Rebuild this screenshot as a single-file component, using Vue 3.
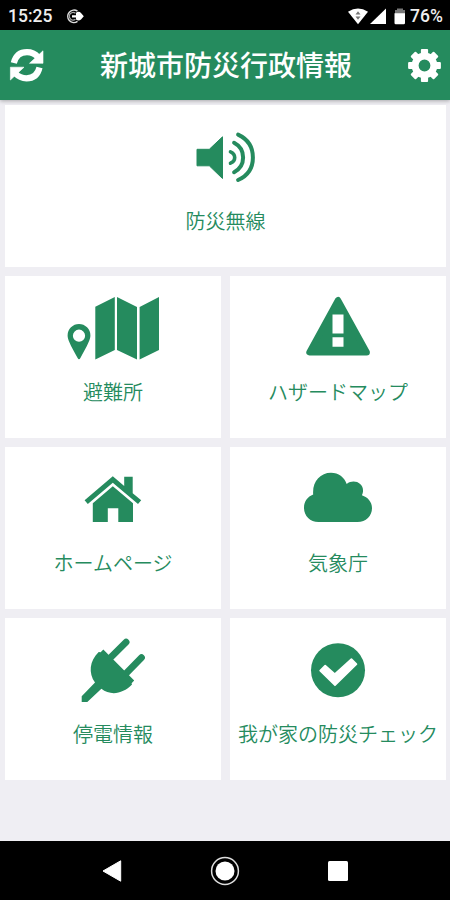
<script setup>
const cards = [
  { id: 'radio', label: '防災無線', wide: true, box: '175.5 117 100 80' },
  { id: 'shelter', label: '避難所', box: '63 288 100 80' },
  { id: 'hazard', label: 'ハザードマップ', box: '288 288 100 80' },
  { id: 'home', label: 'ホームページ', box: '63 459 100 80' },
  { id: 'weather', label: '気象庁', box: '288 459 100 80' },
  { id: 'outage', label: '停電情報', box: '63 630 100 80' },
  { id: 'check', label: '我が家の防災チェック', box: '288 630 100 80' },
]
const teeth = [0, 45, 90, 135, 180, 225, 270, 315]
</script>

<template>
  <div class="screen">
    <div class="status">
      <span class="time">15:25</span>
      <svg class="notice" width="20" height="18" viewBox="65 6 20 18">
        <path d="M77.5 10.2A6.2 6.2 0 1 0 77.5 20.4" fill="none" stroke="#ddd" stroke-width="1.5" />
        <path d="M75.5 12.2A3.8 3.8 0 1 0 75.5 18.3" fill="none" stroke="#aaa" stroke-width="1.2" />
        <path d="M72 14.2h4v-2.4q3-2 5 .3l2.8 3.2-2.8 3.2q-2.4 2-5 0v-2h-4z" fill="#fff" />
      </svg>
      <svg class="signals" width="60" height="18" viewBox="348 6 60 18">
        <path d="M348 10.8Q358 4.4 368 10.8L358 23.2Z" fill="#fff" />
        <path d="M355.5 13.5l2.5-3.3 2.5 3.3zM355.5 15.5l2.5 3.3 2.5-3.3z" fill="#777" />
        <path d="M370 23L386 7.5V23Z" fill="#fff" />
        <path d="M397 7.5h6V9h2v5h-10V9h2z" fill="#777" />
        <path d="M394.5 12.3h10.5v9.7q0 1.3-1.3 1.3h-7.9q-1.3 0-1.3-1.3z" fill="#fff" />
      </svg>
      <span class="battery">76%</span>
    </div>

    <header class="bar">
      <svg width="36" height="36" viewBox="9 47 36 36">
        <g fill="none" stroke="#fff" stroke-width="6.2">
          <path d="M13.8 63Q16.5 52.2 27 52.2Q33.5 52.2 38 57" />
          <path d="M39.5 67.5Q37 78.3 26.5 78.3Q20 78.3 15.5 73.5" />
        </g>
        <path d="M43 50.8V63.3H29.5ZM10.4 80V67.2H24Z" fill="#fff" stroke="#fff" stroke-width=".6" stroke-linejoin="round" />
      </svg>
      <h1>新城市防災行政情報</h1>
      <svg width="36" height="36" viewBox="-17.5 -18.5 36 36">
        <rect v-for="a in teeth" :key="a" x="-3.6" y="-16.4" width="7.2" height="8" rx="1" fill="#fff" :transform="`rotate(${a})`" />
        <circle r="9.4" fill="none" stroke="#fff" stroke-width="7" />
      </svg>
    </header>

    <main class="grid">
      <div v-for="c in cards" :key="c.id" class="card" :class="{ wide: c.wide }">
        <svg class="icon" width="100" height="80" :viewBox="c.box">
          <template v-if="c.id === 'radio'">
            <path d="M196.5 149.3H208.8L222 136.8V178.5L208.8 165.8H196.5Z" stroke="#258b5e" stroke-linejoin="round" />
            <g fill="none" stroke="#258b5e" stroke-width="4" stroke-linecap="round">
              <path d="M230 151.8Q234.2 153.5 234.2 157.5T230 163.2" stroke-width="3.6" />
              <path d="M233.6 142.8Q242.6 147.5 242.6 157.5T233.6 172.2" />
              <path d="M237.6 134.6Q252.4 141.5 252.4 157.5T237.6 180" />
            </g>
          </template>
          <template v-else-if="c.id === 'shelter'">
            <path d="M95.3 306.7L114.8 297V350L95.3 359.6ZM117 297L137 307V359.6L117 350ZM139.6 307L159 297V350L139.6 359.6Z" />
            <path fill-rule="evenodd" d="M79 324A11.4 11.4 0 0 1 90.4 335.4C90.4 339.5 88 344 80.4 358Q79 360.6 77.6 358C70 344 67.6 339.5 67.6 335.4A11.4 11.4 0 0 1 79 324ZM79 329.6A6.1 6.1 0 1 0 79 341.8A6.1 6.1 0 1 0 79 329.6Z" />
          </template>
          <template v-else-if="c.id === 'hazard'">
            <path d="M338 300.2L309.5 352.3H366.7Z" stroke="#258b5e" stroke-width="6.4" stroke-linejoin="round" />
            <path d="M332.5 314.5h11v19h-11zM332.5 337.3h11v9.5h-11z" fill="#fff" />
          </template>
          <template v-else-if="c.id === 'home'">
            <path d="M84.6 500.3L112.8 476.3L124.2 486V476.8H132.7V493.2L141.2 500.3L138 504.1L112.8 482.7L87.8 504.1Z" />
            <path d="M112.8 486.3L133 503.3V522H118.3V508.3H107.8V522H92.8V503.3Z" />
          </template>
          <template v-else-if="c.id === 'weather'">
            <path d="M318.5 522C310 522 304 516 304 507.7C304 501.5 307.7 496.8 313.2 494.6C312 482 320 472.8 331 472.8C338.6 472.8 344.2 477.4 346.7 483.9C354 478.4 364.8 483.2 362.8 492.8Q362.5 494 361.9 495.2C368 497.2 372 502 372 508C372 516 366 522 357.5 522Z" />
          </template>
          <template v-else-if="c.id === 'outage'">
            <path d="M103.3 649.6L134.2 680.5L131.6 683.2L132 684.6C123 694 110.5 696 101.4 688.8L87.3 702H81.7V696.2L95 682.6C88.2 673 89.5 661 98.7 652L100.7 652.2Z" />
            <path d="M111 657.2L126.1 642.1M126.6 672.8L141.5 657.7" stroke="#258b5e" stroke-width="6.8" stroke-linecap="round" />
          </template>
          <template v-else>
            <circle cx="338" cy="670.3" r="27" />
            <path d="M320.2 670.7L325.2 665.7L334.8 674.2L351.4 659.2L356.4 664.2L335 685.2Z" fill="#fff" stroke="#fff" stroke-width="1.8" stroke-linejoin="round" />
          </template>
        </svg>
        <span class="label">{{ c.label }}</span>
      </div>
    </main>

    <nav class="nav">
      <svg width="30" height="30" viewBox="97 855.5 30 30">
        <path d="M103 870.5L120.7 860.3V880.7Z" fill="#fff" stroke="#fff" stroke-linejoin="round" />
      </svg>
      <svg width="30" height="30" viewBox="-15 -15 30 30">
        <circle r="13.4" fill="none" stroke="#ddd" stroke-width="1.5" />
        <circle r="9.5" fill="#fff" />
      </svg>
      <svg width="30" height="30" viewBox="-15 -15 30 30">
        <rect x="-10" y="-10" width="20" height="20" rx="1.5" fill="#fff" />
      </svg>
    </nav>
  </div>
</template>

<style>
body {
  margin: 0;
}
</style>

<style scoped>
.screen {
  width: 450px;
  height: 900px;
  display: flex;
  flex-direction: column;
  overflow: hidden;
  background: #efeef3;
  font-family: "Noto Sans CJK JP", sans-serif;
}
svg {
  display: block;
  flex: none;
}
.status {
  height: 30px;
  flex: none;
  box-sizing: border-box;
  padding: 1px 7px 0 8px;
  display: flex;
  align-items: center;
  background: #000;
  color: #eee;
  font: 500 17.5px/28px Roboto, sans-serif;
}
.time {
  width: 57px;
}
.signals {
  margin-left: auto;
  margin-right: 2px;
}
.battery {
  width: 33px;
  white-space: nowrap;
}
.bar {
  height: 70px;
  flex: none;
  box-sizing: border-box;
  padding: 0 7px 0 9px;
  display: flex;
  align-items: center;
  justify-content: space-between;
  background: #258b5e;
  box-shadow: 0 1px 4px rgba(0, 0, 0, 0.3);
}
h1 {
  margin: 0;
  padding-bottom: 2px;
  color: #fff;
  font-size: 28px;
  line-height: 40px;
  font-weight: 500;
}
.grid {
  flex: 1;
  padding: 5px 4px 0 5px;
  display: grid;
  grid-template-columns: 1fr 1fr;
  grid-auto-rows: 162px;
  align-content: start;
  gap: 9px;
}
.card {
  box-sizing: border-box;
  padding-top: 12px;
  display: flex;
  flex-direction: column;
  align-items: center;
  background: #fff;
}
.wide {
  grid-column: 1 / -1;
}
.icon {
  fill: #258b5e;
}
.label {
  margin-top: 9px;
  color: #258b5e;
  font-size: 20px;
  line-height: 30px;
  font-weight: 350;
  white-space: nowrap;
}
.nav {
  height: 59px;
  flex: none;
  box-sizing: border-box;
  padding: 0 97px;
  display: flex;
  align-items: center;
  justify-content: space-between;
  background: #000;
}
</style>
